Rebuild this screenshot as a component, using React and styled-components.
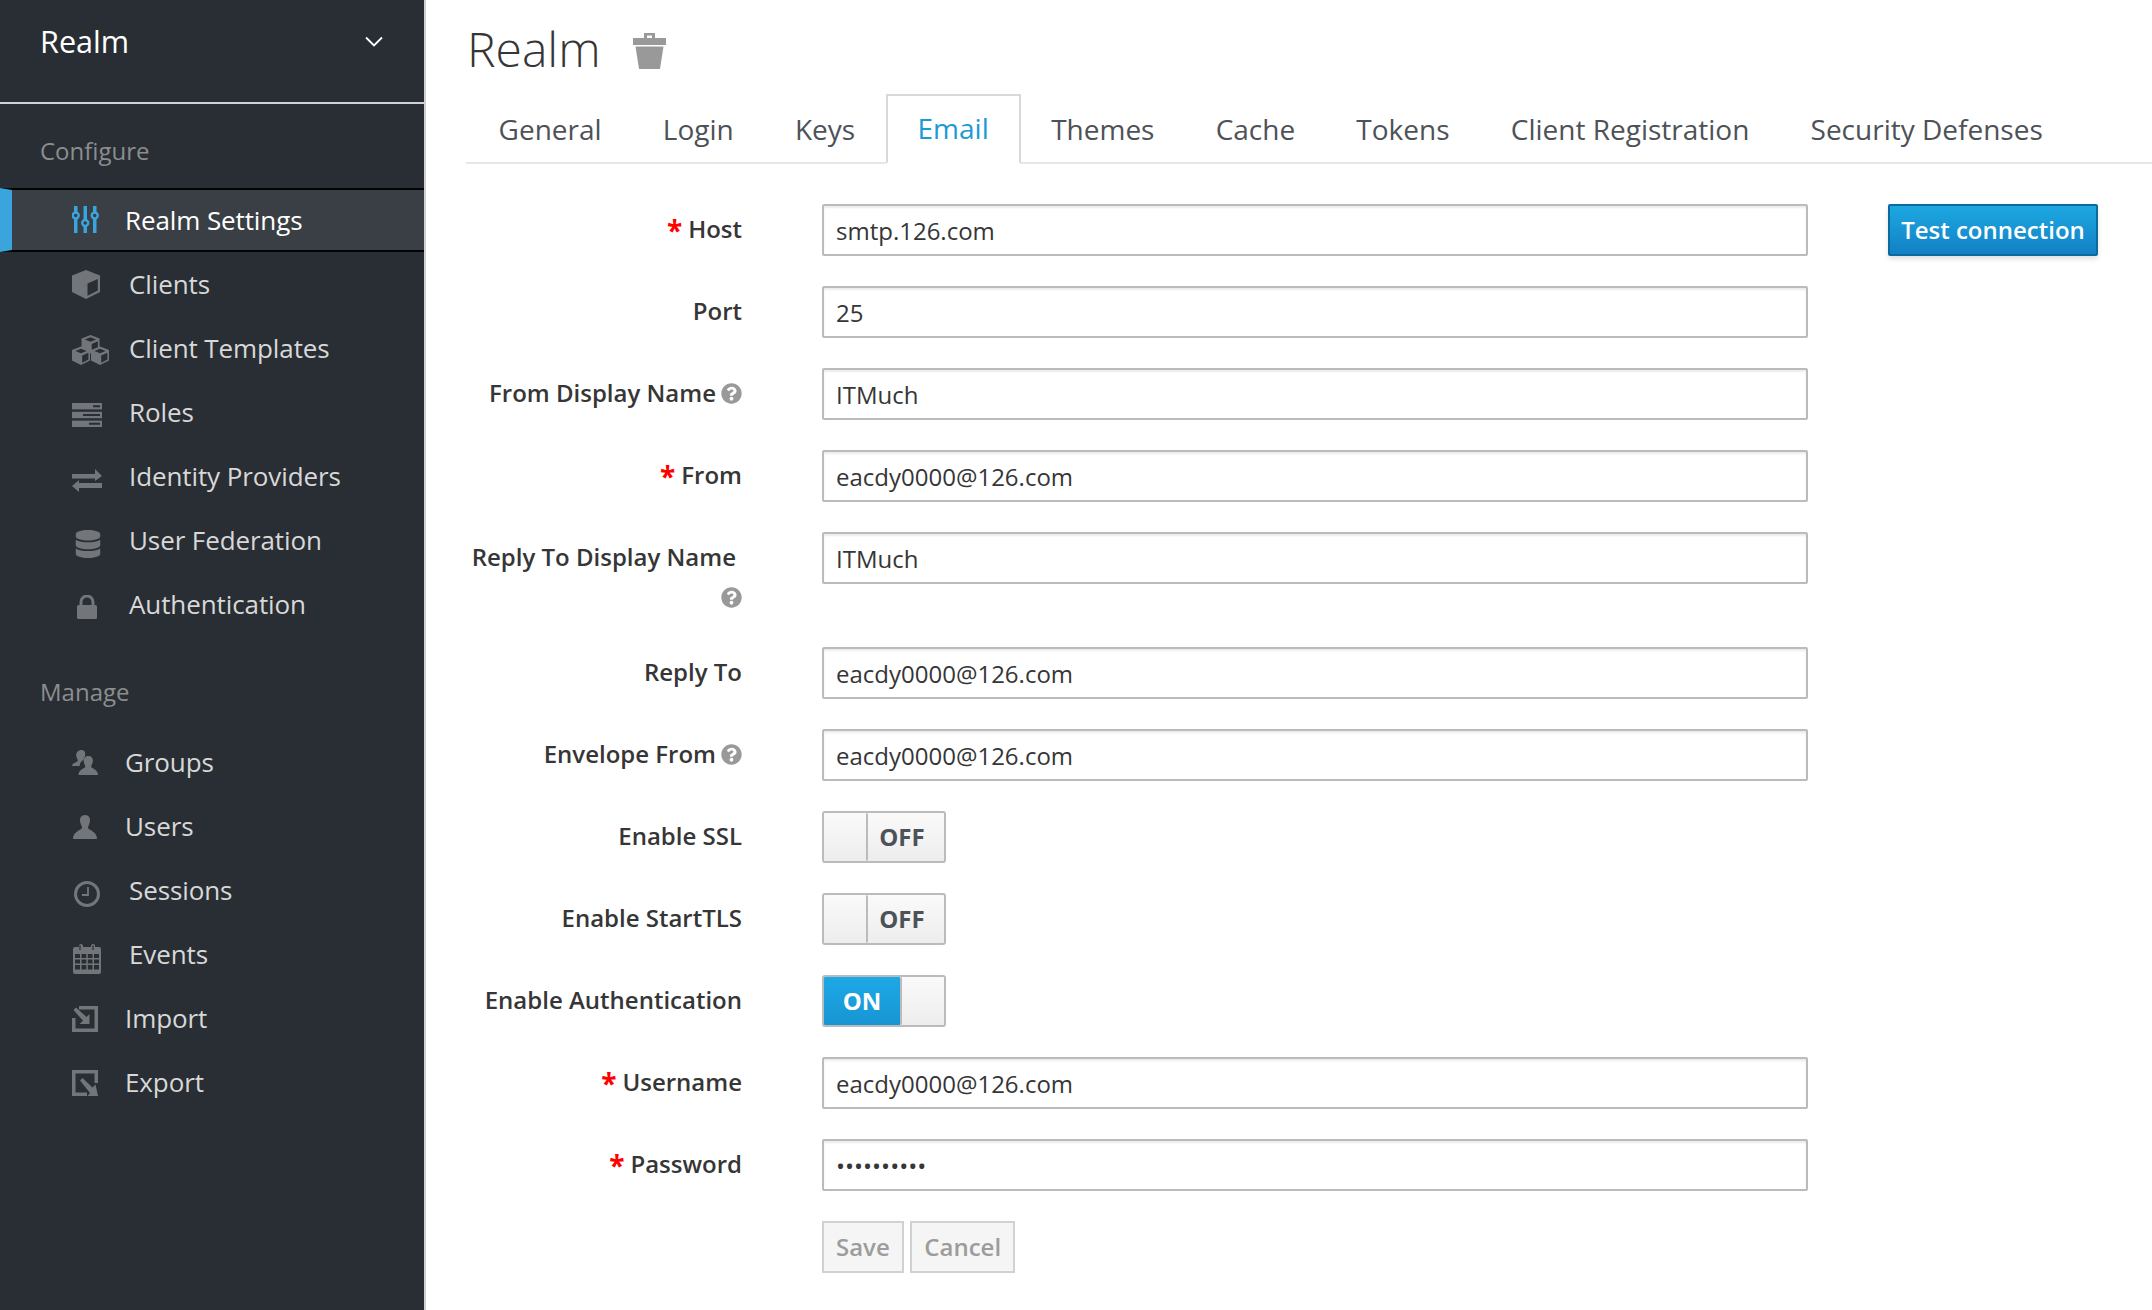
import styled, { createGlobalStyle } from "styled-components";
import { FaDatabase, FaQuestionCircle } from "react-icons/fa";

const GlobalStyle = createGlobalStyle`
  html, body {
    margin: 0;
    padding: 0;
    background: #fff;
  }
  body {
    font-family: "Open Sans", "Liberation Sans", sans-serif;
    color: #363636;
  }
  * {
    box-sizing: border-box;
  }
`;

const Page = styled.div`
  display: flex;
  width: 2152px;
  height: 1310px;
  overflow: hidden;
`;

const Sidebar = styled.aside`
  flex: 0 0 426px;
  background: #292e34;
  border-right: 2px solid #d1d1d1;
`;

const RealmHeader = styled.div`
  display: flex;
  align-items: center;
  justify-content: space-between;
  height: 104px;
  padding: 0 41px 20px 40px;
  border-bottom: 2px solid #d1d1d1;
  color: #fff;
  font-size: 30.6px;
`;

const GroupTitle = styled.div`
  display: flex;
  align-items: flex-start;
  height: ${(p) => p.$height}px;
  padding: ${(p) => p.$top}px 0 0 40px;
  color: #8b8d8f;
  font-size: 24px;
  line-height: 34px;
`;

const NavList = styled.ul`
  list-style: none;
  margin: 0;
  padding: 0;
`;

const NavItem = styled.li`
  display: flex;
  align-items: center;
  height: 64px;
  padding-left: ${(p) => (p.$active ? 60 : 72)}px;
  padding-bottom: ${(p) => (p.$active ? 0 : 1)}px;
  color: ${(p) => (p.$active ? "#fff" : "#d8d8d8")};
  background: ${(p) => (p.$active ? "#393f44" : "transparent")};
  border-top: ${(p) => (p.$active ? "2px solid #030303" : "none")};
  border-bottom: ${(p) => (p.$active ? "2px solid #030303" : "none")};
  border-left: ${(p) => (p.$active ? "12px solid #39a5dc" : "none")};
  font-size: 26px;
  letter-spacing: -0.1px;
`;

const NavIcon = styled.span`
  display: flex;
  align-items: center;
  flex: 0 0 ${(p) => p.$width}px;
  padding-left: ${(p) => p.$left || 0}px;
  color: ${(p) => (p.$active ? "#39a5dc" : "#72767b")};
  transform: translateY(${(p) => (p.$active ? 0 : (p.$shift || 0) + 1)}px);
`;

const Main = styled.main`
  flex: 1;
  min-width: 0;
  padding-left: 40px;
`;

const TitleRow = styled.div`
  display: flex;
  align-items: center;
  height: 94px;
  padding: 2px 0 0 1px;
  gap: 32px;
`;

const Title = styled.h1`
  margin: 0;
  color: #363636;
  font-size: 48px;
  font-weight: 300;
`;

const TrashButton = styled.span`
  display: flex;
  margin-top: 6px;
  color: #999;
`;

const TabBar = styled.ul`
  display: flex;
  align-items: flex-start;
  list-style: none;
  margin: 0;
  padding: 0 0 0 2px;
  height: 70px;
  border-bottom: 2px solid #e7e7e7;
`;

const Tab = styled.li`
  display: flex;
  align-items: center;
  height: ${(p) => (p.$active ? 70 : 68)}px;
  padding: ${(p) => (p.$active ? "3px 29.8px 5px" : "3px 28.6px 3px")};
  background: ${(p) => (p.$active ? "#fff" : "transparent")};
  border: 2px solid ${(p) => (p.$active ? "#d9d9d9" : "transparent")};
  border-bottom: ${(p) => (p.$active ? "2px solid #fff" : "none")};
  color: ${(p) => (p.$active ? "#1a9ad6" : "#4d5258")};
  font-size: 28px;
`;

const Form = styled.form`
  display: grid;
  grid-template-columns: 276px 986px 210px;
  column-gap: 80px;
  row-gap: 30px;
  margin-top: 40px;
`;

const Label = styled.label`
  grid-column: 1;
  align-self: start;
  display: block;
  min-height: ${(p) => (p.$wrapped ? 85 : 52)}px;
  padding-top: 5px;
  text-align: right;
  color: #363636;
  font-size: 24px;
  font-weight: 600;
  line-height: 40px;
`;

const LabelLine = styled.span`
  display: block;
  padding-right: 6px;
  white-space: nowrap;
`;

const Required = styled.span`
  color: #f00;
  font-size: 28px;
  font-weight: 700;
  line-height: 20px;
  margin-right: 6px;
  vertical-align: -3px;
`;

const Help = styled.span`
  display: inline-flex;
  margin-left: 5px;
  color: #999;
  font-size: 21px;
  vertical-align: -2px;
`;

const Input = styled.input`
  grid-column: 2;
  display: block;
  width: 100%;
  height: 52px;
  padding: 0 12px;
  background: #fff;
  border: 2px solid #bbb;
  border-radius: 2px;
  box-shadow: inset 0 2px 2px rgba(3, 3, 3, 0.08);
  color: #363636;
  font-family: inherit;
  font-size: 24px;
  outline: none;
`;

const ConnectionButton = styled.button`
  grid-column: 3;
  height: 52px;
  padding: 0 0 2px;
  background: linear-gradient(#1da8e2, #1280c4);
  border: 2px solid #0b6b9c;
  border-radius: 2px;
  box-shadow: 0 3px 5px rgba(3, 3, 3, 0.12);
  color: #fff;
  font-family: inherit;
  font-size: 24px;
  font-weight: 600;
`;

const ToggleTrack = styled.div`
  grid-column: 2;
  display: flex;
  width: 124px;
  height: 52px;
  overflow: hidden;
  background: linear-gradient(#fafafa, #ededed);
  border: 2px solid #bbb;
  border-radius: 3px;
`;

const ToggleKnob = styled.span`
  flex: 0 0 44px;
  order: ${(p) => (p.$on ? 2 : 1)};
  background: linear-gradient(#fafafa, #ededed);
  border-left: ${(p) => (p.$on ? "2px solid #bbb" : "none")};
  border-right: ${(p) => (p.$on ? "none" : "2px solid #bbb")};
  border-radius: 2px;
`;

const ToggleText = styled.span`
  display: flex;
  align-items: center;
  justify-content: center;
  flex: 1;
  order: ${(p) => (p.$on ? 1 : 2)};
  padding-right: ${(p) => (p.$on ? 0 : 8)}px;
  padding-bottom: 2px;
  background: ${(p) => (p.$on ? "linear-gradient(#1ca9e6, #1895d3)" : "transparent")};
  color: ${(p) => (p.$on ? "#fff" : "#4d5258")};
  font-size: 24px;
  font-weight: 700;
`;

const ButtonRow = styled.div`
  grid-column: 2;
  display: flex;
  gap: 6.5px;
`;

const DisabledButton = styled.button`
  height: 52px;
  padding: 0 12px 2px;
  background: #f5f5f5;
  border: 2px solid #d1d1d1;
  color: #9c9c9c;
  font-family: inherit;
  font-size: 24px;
  font-weight: 600;
`;

const cubeDark = "#292e34";

const SlidersIcon = () => (
  <svg width="27" height="28" viewBox="0 0 27 28">
    <g fill="currentColor">
      <rect x="2" y="0" width="3.5" height="27" />
      <rect x="11.5" y="0" width="3.5" height="27" />
      <rect x="21" y="0" width="3.5" height="27" />
    </g>
    <g fill="#393f44" stroke="currentColor" strokeWidth="2.4">
      <circle cx="3.7" cy="9.5" r="3" />
      <circle cx="13.2" cy="17" r="3" />
      <circle cx="22.7" cy="9.5" r="3" />
    </g>
  </svg>
);

const CubeIcon = () => (
  <svg width="28" height="29" viewBox="0 0 28 29">
    <path d="M14 0 28 5.5V22L14 29 0 22V5.5Z" fill="currentColor" />
    <path d="M15.5 13.5 25.8 9V20.6L15.5 25.8Z" fill={cubeDark} />
  </svg>
);

const SmallCube = ({ x, y }) => (
  <g transform={`translate(${x} ${y})`}>
    <path d="M9 0 18 3.6V14L9 18.4 0 14V3.6Z" fill="currentColor" />
    <path d="M9 2.2 14.6 4.4 9 6.8 3.4 4.4Z" fill={cubeDark} />
    <path d="M10.2 9 16.4 6.2V13L10.2 16.2Z" fill={cubeDark} />
  </g>
);

const CubesIcon = () => (
  <svg width="37" height="30" viewBox="0 0 37 30">
    <SmallCube x={9.5} y={0} />
    <SmallCube x={0} y={11.5} />
    <SmallCube x={19} y={11.5} />
  </svg>
);

const RolesIcon = () => (
  <svg width="30" height="24" viewBox="0 0 30 24">
    <path d="M0 0H30V6.4H0Z" fill="currentColor" />
    <path d="M0 8.8H30V15.2H0Z" fill="currentColor" />
    <path d="M0 17.6H30V24H0Z" fill="currentColor" />
    <path d="M21 2.2H28V4.2H21ZM11 11H28V13H11ZM17 19.8H28V21.8H17Z" fill={cubeDark} />
  </svg>
);

const ExchangeIcon = () => (
  <svg width="30" height="23" viewBox="0 0 30 23">
    <path d="M0 5H23V0L30 7 23 12 23 9.5H0Z" fill="currentColor" />
    <path d="M30 14H7V11L0 17 7 23V19H30Z" fill="currentColor" />
  </svg>
);

const LockIcon = () => (
  <svg width="20" height="24" viewBox="0 0 20 24">
    <path d="M4 11V7a6 6 0 0 1 12 0v4" fill="none" stroke="currentColor" strokeWidth="3" />
    <rect x="0" y="10" width="20" height="14" rx="1.5" fill="currentColor" />
  </svg>
);

const GroupsIcon = () => (
  <svg width="26" height="25" viewBox="0 0 26 25">
    <path d="M9.5 0c3 0 4.3 2.5 3.6 5.4-.5 2-1.5 3.5-1.7 4.5-2.2 1-3.4 2.8-3.8 6.1H0c0-2.7 4-3.5 5.8-5 .5-1.7-1.4-2.5-1.6-5.6C4 2.3 6.4 0 9.5 0Z" fill="currentColor" />
    <path d="M16.5 6c3.2 0 4.8 2.6 4.3 5.7-.3 2.2-1.6 3.4-1.6 5.3 1.6 1.8 6.8 3 6.8 8H6.5c0-5 5.2-6.2 6.8-8 0-1.9-1.3-3.1-1.6-5.3C11.2 8.6 13.3 6 16.5 6Z" fill="currentColor" />
  </svg>
);

const UserIcon = () => (
  <svg width="24" height="24" viewBox="0 0 24 24">
    <path d="M12 0c3.6 0 5.3 2.8 5 6-.3 3-2 5-2 7 1.5 2.5 9 3.5 9 11H0c0-7.5 7.5-8.5 9-11 0-2-1.7-4-2-7-.3-3.2 1.4-6 5-6Z" fill="currentColor" />
  </svg>
);

const ClockIcon = () => (
  <svg width="26" height="26" viewBox="0 0 26 26">
    <circle cx="13" cy="13" r="11.5" fill="none" stroke="currentColor" strokeWidth="3" />
    <path d="M14 6V14H8" fill="none" stroke="currentColor" strokeWidth="1.8" />
  </svg>
);

const CalendarIcon = () => (
  <svg width="28" height="30" viewBox="0 0 28 30">
    <path d="M2 3H6V1.5a2 1.5 0 0 1 4 0V3H18V1.5a2 1.5 0 0 1 4 0V3H26a2 2 0 0 1 2 2V28a2 2 0 0 1-2 2H2a2 2 0 0 1-2-2V5a2 2 0 0 1 2-2Z" fill="currentColor" />
    <path d="M2 10H7V14H2ZM8.5 10H13.3V14H8.5ZM14.8 10H19.5V14H14.8ZM21 10H26V14H21ZM2 15.5H7V19.5H2ZM8.5 15.5H13.3V19.5H8.5ZM14.8 15.5H19.5V19.5H14.8ZM21 15.5H26V19.5H21ZM2 21H7V25.5H2ZM8.5 21H13.3V25.5H8.5ZM14.8 21H19.5V25.5H14.8ZM21 21H26V25.5H21Z" fill={cubeDark} />
    <path d="M7 1.5V6M20 1.5V6" stroke={cubeDark} strokeWidth="1.2" />
  </svg>
);

const ImportIcon = () => (
  <svg width="26" height="26" viewBox="0 0 26 26">
    <path d="M7 0H26V26H0V12H3.5V22.5H22.5V3.5H7Z" fill="currentColor" />
    <path d="M1.5 4 4 1.5 14.5 11 17.5 8V18H7.5L11 14.8Z" fill="currentColor" />
  </svg>
);

const ExportIcon = () => (
  <svg width="26" height="26" viewBox="0 0 26 26">
    <path d="M0 0H26V13H22.5V3.5H3.5V22.5H15V26H0Z" fill="currentColor" />
    <path d="M8 10.5 10.5 8 20.5 17.5 23.5 14.5 26 26H15.5L18 23Z" fill="currentColor" />
  </svg>
);

const TrashIcon = () => (
  <svg width="33" height="36" viewBox="0 0 33 36">
    <path d="M11 0H22V5H33V12H0V5H11ZM14 2.5V5H19V2.5Z" fill="currentColor" fillRule="evenodd" />
    <path d="M2.5 13.5H30.5L27 36H6Z" fill="currentColor" />
  </svg>
);

const ChevronIcon = () => (
  <svg width="18" height="11" viewBox="0 0 18 11">
    <path d="M1 1.5 9 9.5 17 1.5" fill="none" stroke="#fff" strokeWidth="1.8" />
  </svg>
);

const configureItems = [
  { label: "Realm Settings", icon: <SlidersIcon />, width: 53, active: true },
  { label: "Clients", icon: <CubeIcon />, width: 57 },
  { label: "Client Templates", icon: <CubesIcon />, width: 57, shift: 1 },
  { label: "Roles", icon: <RolesIcon />, width: 57, shift: 2 },
  { label: "Identity Providers", icon: <ExchangeIcon />, width: 57, shift: 4 },
  { label: "User Federation", icon: <FaDatabase size={28} />, width: 57, left: 2, shift: 3 },
  { label: "Authentication", icon: <LockIcon />, width: 57, left: 5, shift: 2 },
];

const manageItems = [
  { label: "Groups", icon: <GroupsIcon />, width: 53 },
  { label: "Users", icon: <UserIcon />, width: 53, left: 1 },
  { label: "Sessions", icon: <ClockIcon />, width: 57, left: 2, shift: 3 },
  { label: "Events", icon: <CalendarIcon />, width: 57, left: 1, shift: 4 },
  { label: "Import", icon: <ImportIcon />, width: 53 },
  { label: "Export", icon: <ExportIcon />, width: 53 },
];

const NavGroup = ({ items }) => (
  <NavList>
    {items.map((item) => (
      <NavItem key={item.label} $active={item.active}>
        <NavIcon $width={item.width} $active={item.active} $shift={item.shift} $left={item.left}>
          {item.icon}
        </NavIcon>
        {item.label}
      </NavItem>
    ))}
  </NavList>
);

const tabs = [
  "General",
  "Login",
  "Keys",
  "Email",
  "Themes",
  "Cache",
  "Tokens",
  "Client Registration",
  "Security Defenses",
];

const HelpIcon = () => (
  <Help>
    <FaQuestionCircle />
  </Help>
);

const TextRow = ({ label, value, required, help, type = "text" }) => (
  <>
    <Label>
      {required && <Required>*</Required>}
      {label}
      {help && <HelpIcon />}
    </Label>
    <Input type={type} defaultValue={value} readOnly />
  </>
);

const ToggleRow = ({ label, on }) => (
  <>
    <Label>{label}</Label>
    <ToggleTrack>
      <ToggleKnob $on={on} />
      <ToggleText $on={on}>{on ? "ON" : "OFF"}</ToggleText>
    </ToggleTrack>
  </>
);

const App = () => (
  <Page>
    <GlobalStyle />
    <Sidebar>
      <RealmHeader>
        Realm
        <ChevronIcon />
      </RealmHeader>
      <GroupTitle $height={84} $top={30}>Configure</GroupTitle>
      <NavGroup items={configureItems} />
      <GroupTitle $height={94} $top={39}>Manage</GroupTitle>
      <NavGroup items={manageItems} />
    </Sidebar>
    <Main>
      <TitleRow>
        <Title>Realm</Title>
        <TrashButton>
          <TrashIcon />
        </TrashButton>
      </TitleRow>
      <TabBar>
        {tabs.map((tab) => (
          <Tab key={tab} $active={tab === "Email"}>
            {tab}
          </Tab>
        ))}
      </TabBar>
      <Form>
        <Label>
          <Required>*</Required>
          Host
        </Label>
        <Input type="text" defaultValue="smtp.126.com" readOnly />
        <ConnectionButton type="button">Test connection</ConnectionButton>
        <TextRow label="Port" value="25" />
        <TextRow label="From Display Name" value="ITMuch" help />
        <TextRow label="From" value="eacdy0000@126.com" required />
        <Label $wrapped>
          <LabelLine>Reply To Display Name</LabelLine>
          <HelpIcon />
        </Label>
        <Input type="text" defaultValue="ITMuch" readOnly />
        <TextRow label="Reply To" value="eacdy0000@126.com" />
        <TextRow label="Envelope From" value="eacdy0000@126.com" help />
        <ToggleRow label="Enable SSL" />
        <ToggleRow label="Enable StartTLS" />
        <ToggleRow label="Enable Authentication" on />
        <TextRow label="Username" value="eacdy0000@126.com" required />
        <TextRow label="Password" value="**********" type="password" required />
        <ButtonRow>
          <DisabledButton type="button">Save</DisabledButton>
          <DisabledButton type="button">Cancel</DisabledButton>
        </ButtonRow>
      </Form>
    </Main>
  </Page>
);

export default App;
